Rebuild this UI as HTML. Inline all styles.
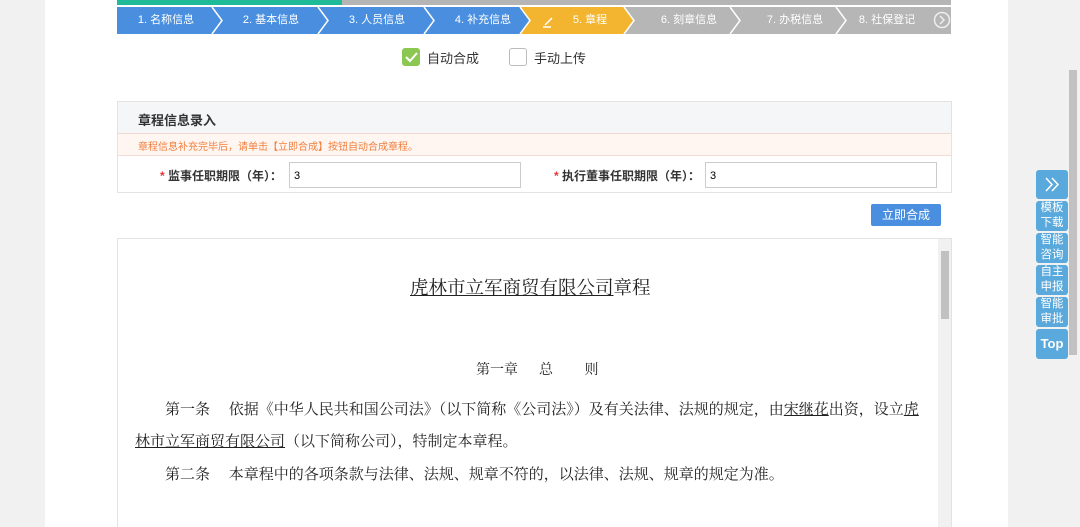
<!DOCTYPE html>
<html><head><meta charset="utf-8"><style>
*{margin:0;padding:0;box-sizing:border-box}
html,body{width:1080px;height:527px;overflow:hidden}
body{background:#fff;font-family:"Liberation Sans","Noto Sans CJK SC",sans-serif;position:relative}
.a{position:absolute}
.step{position:absolute;top:7px;height:27px;color:#fff;font-size:11px;line-height:27px;text-align:center}
.ser{font-family:"Liberation Serif","Noto Serif CJK SC",serif;color:#222}
.side div{position:absolute;left:1036px;width:32px;background:#5aa9dd;color:#fff;border-radius:3px;font-size:11.5px;line-height:15px;text-align:center}
</style></head><body>
<div class="a" style="left:0;top:0;width:45px;height:527px;background:#f1f1f1"></div>
<div class="a" style="left:1008px;top:0;width:72px;height:527px;background:#f1f1f1"></div>
<div class="a" style="left:1069px;top:70px;width:8px;height:285px;background:#c1c1c1"></div>
<div class="a" style="left:117px;top:0;width:225px;height:5px;background:#1fbb98"></div>
<div class="a" style="left:342px;top:0;width:609px;height:5px;background:#b5b5b5"></div>
<svg class="a" style="left:117px;top:7px" width="834" height="27">
<rect x="0" y="0" width="834" height="27" fill="#b6b6b6"/>
<polygon points="0,0 507,0 517,13.5 507,27 0,27" fill="#f3b52f"/>
<polygon points="0,0 403,0 413,13.5 403,27 0,27" fill="#4a8fdf"/>
<g stroke="#fff" stroke-width="1.5" fill="none">
<polyline points="95,0 105,13.5 95,27"/><polyline points="201,0 211,13.5 201,27"/><polyline points="307,0 317,13.5 307,27"/><polyline points="403,0 413,13.5 403,27"/><polyline points="507,0 517,13.5 507,27"/><polyline points="613,0 623,13.5 613,27"/><polyline points="719,0 729,13.5 719,27"/>
<circle cx="825" cy="13" r="7.5" stroke="#eee"/><polyline points="823,9 827,13 823,17" stroke="#eee"/>
<path d="M428,18 L435,11 M426,20 h8" stroke-width="1.5"/>
</g>
</svg>
<div class="step" style="left:117px;width:98px">1. 名称信息</div>
<div class="step" style="left:222px;width:98px">2. 基本信息</div>
<div class="step" style="left:328px;width:98px">3. 人员信息</div>
<div class="step" style="left:434px;width:98px">4. 补充信息</div>
<div class="step" style="left:560px;width:60px">5. 章程</div>
<div class="step" style="left:640px;width:98px">6. 刻章信息</div>
<div class="step" style="left:746px;width:98px">7. 办税信息</div>
<div class="step" style="left:838px;width:98px">8. 社保登记</div>
<div class="a" style="left:402px;top:48px;width:18px;height:18px;background:#8cc751;border-radius:3px"></div>
<svg class="a" style="left:402px;top:48px" width="18" height="18"><polyline points="4,9 8,13 15,5" stroke="#fff" stroke-width="2" fill="none"/></svg>
<div class="a" style="left:427px;top:48px;font-size:13px;color:#333">自动合成</div>
<div class="a" style="left:509px;top:48px;width:18px;height:18px;border:1px solid #bbb;border-radius:3px"></div>
<div class="a" style="left:534px;top:48px;font-size:13px;color:#333">手动上传</div>
<div class="a" style="left:117px;top:101px;width:835px;height:92px;border:1px solid #e3e3e3"></div>
<div class="a" style="left:118px;top:102px;width:833px;height:32px;background:#f5f6f8;border-bottom:1px solid #efd9d2"></div>
<div class="a" style="left:138px;top:110px;font-size:13px;font-weight:bold;color:#333">章程信息录入</div>
<div class="a" style="left:118px;top:134px;width:833px;height:22px;background:#fff6f2;border-bottom:1px solid #f2dcd4"></div>
<div class="a" style="left:138px;top:138px;font-size:10px;color:#f07f3c">章程信息补充完毕后，请单击【立即合成】按钮自动合成章程。</div>
<div class="a" style="left:160px;top:167px;font-size:12px;color:#333;font-weight:bold"><span style="color:#e33">*</span> 监事任职期限（年）：</div>
<div class="a" style="left:289px;top:162px;width:232px;height:26px;border:1px solid #ccc;font-size:11px;line-height:26px;padding-left:4px">3</div>
<div class="a" style="left:554px;top:167px;font-size:12px;color:#333;font-weight:bold"><span style="color:#e33">*</span> 执行董事任职期限（年）：</div>
<div class="a" style="left:705px;top:162px;width:232px;height:26px;border:1px solid #ccc;font-size:11px;line-height:26px;padding-left:4px">3</div>
<div class="a" style="left:871px;top:204px;width:70px;height:22px;background:#4a8fdf;color:#fff;font-size:12px;line-height:22px;text-align:center;border-radius:2px">立即合成</div>
<div class="a" style="left:117px;top:238px;width:835px;height:289px;border:1px solid #e3e3e3;border-bottom:none"></div>
<div class="a" style="left:938px;top:239px;width:13px;height:288px;background:#f1f1f1"></div>
<div class="a" style="left:941px;top:251px;width:8px;height:68px;background:#c1c1c1"></div>
<div class="a ser" style="left:410px;top:274px;font-size:18.5px"><u>虎林市立军商贸有限公司</u>章程</div>
<div class="a ser" style="left:476px;top:359px;font-size:14px">第一章&nbsp;&nbsp;&nbsp;&nbsp;&nbsp;&nbsp;总&nbsp;&nbsp;&nbsp;&nbsp;&nbsp;&nbsp;&nbsp;&nbsp;&nbsp;则</div>
<div class="a ser" style="left:165px;top:398px;font-size:15px;white-space:nowrap">第一条&nbsp;&nbsp;&nbsp;&nbsp;&nbsp;依据《中华人民共和国公司法》（以下简称《公司法》）及有关法律、法规的规定，由<u>宋继花</u>出资，设立<u>虎</u></div>
<div class="a ser" style="left:135px;top:430px;font-size:15px;white-space:nowrap"><u>林市立军商贸有限公司</u>（以下简称公司），特制定本章程。</div>
<div class="a ser" style="left:165px;top:463px;font-size:15px;white-space:nowrap">第二条&nbsp;&nbsp;&nbsp;&nbsp;&nbsp;本章程中的各项条款与法律、法规、规章不符的，以法律、法规、规章的规定为准。</div>
<div class="side">
<div style="top:170px;height:29px"><svg width="32" height="29"><g stroke="#fff" stroke-width="1.5" fill="none"><polyline points="10,8 16,14.5 10,21"/><polyline points="16,8 22,14.5 16,21"/></g></svg></div>
<div style="top:201px;height:30px">模板<br>下载</div>
<div style="top:233px;height:30px">智能<br>咨询</div>
<div style="top:265px;height:30px">自主<br>申报</div>
<div style="top:297px;height:30px">智能<br>审批</div>
<div style="top:329px;height:30px;line-height:30px;font-weight:bold;font-size:13px">Top</div>
</div>
</body></html>
